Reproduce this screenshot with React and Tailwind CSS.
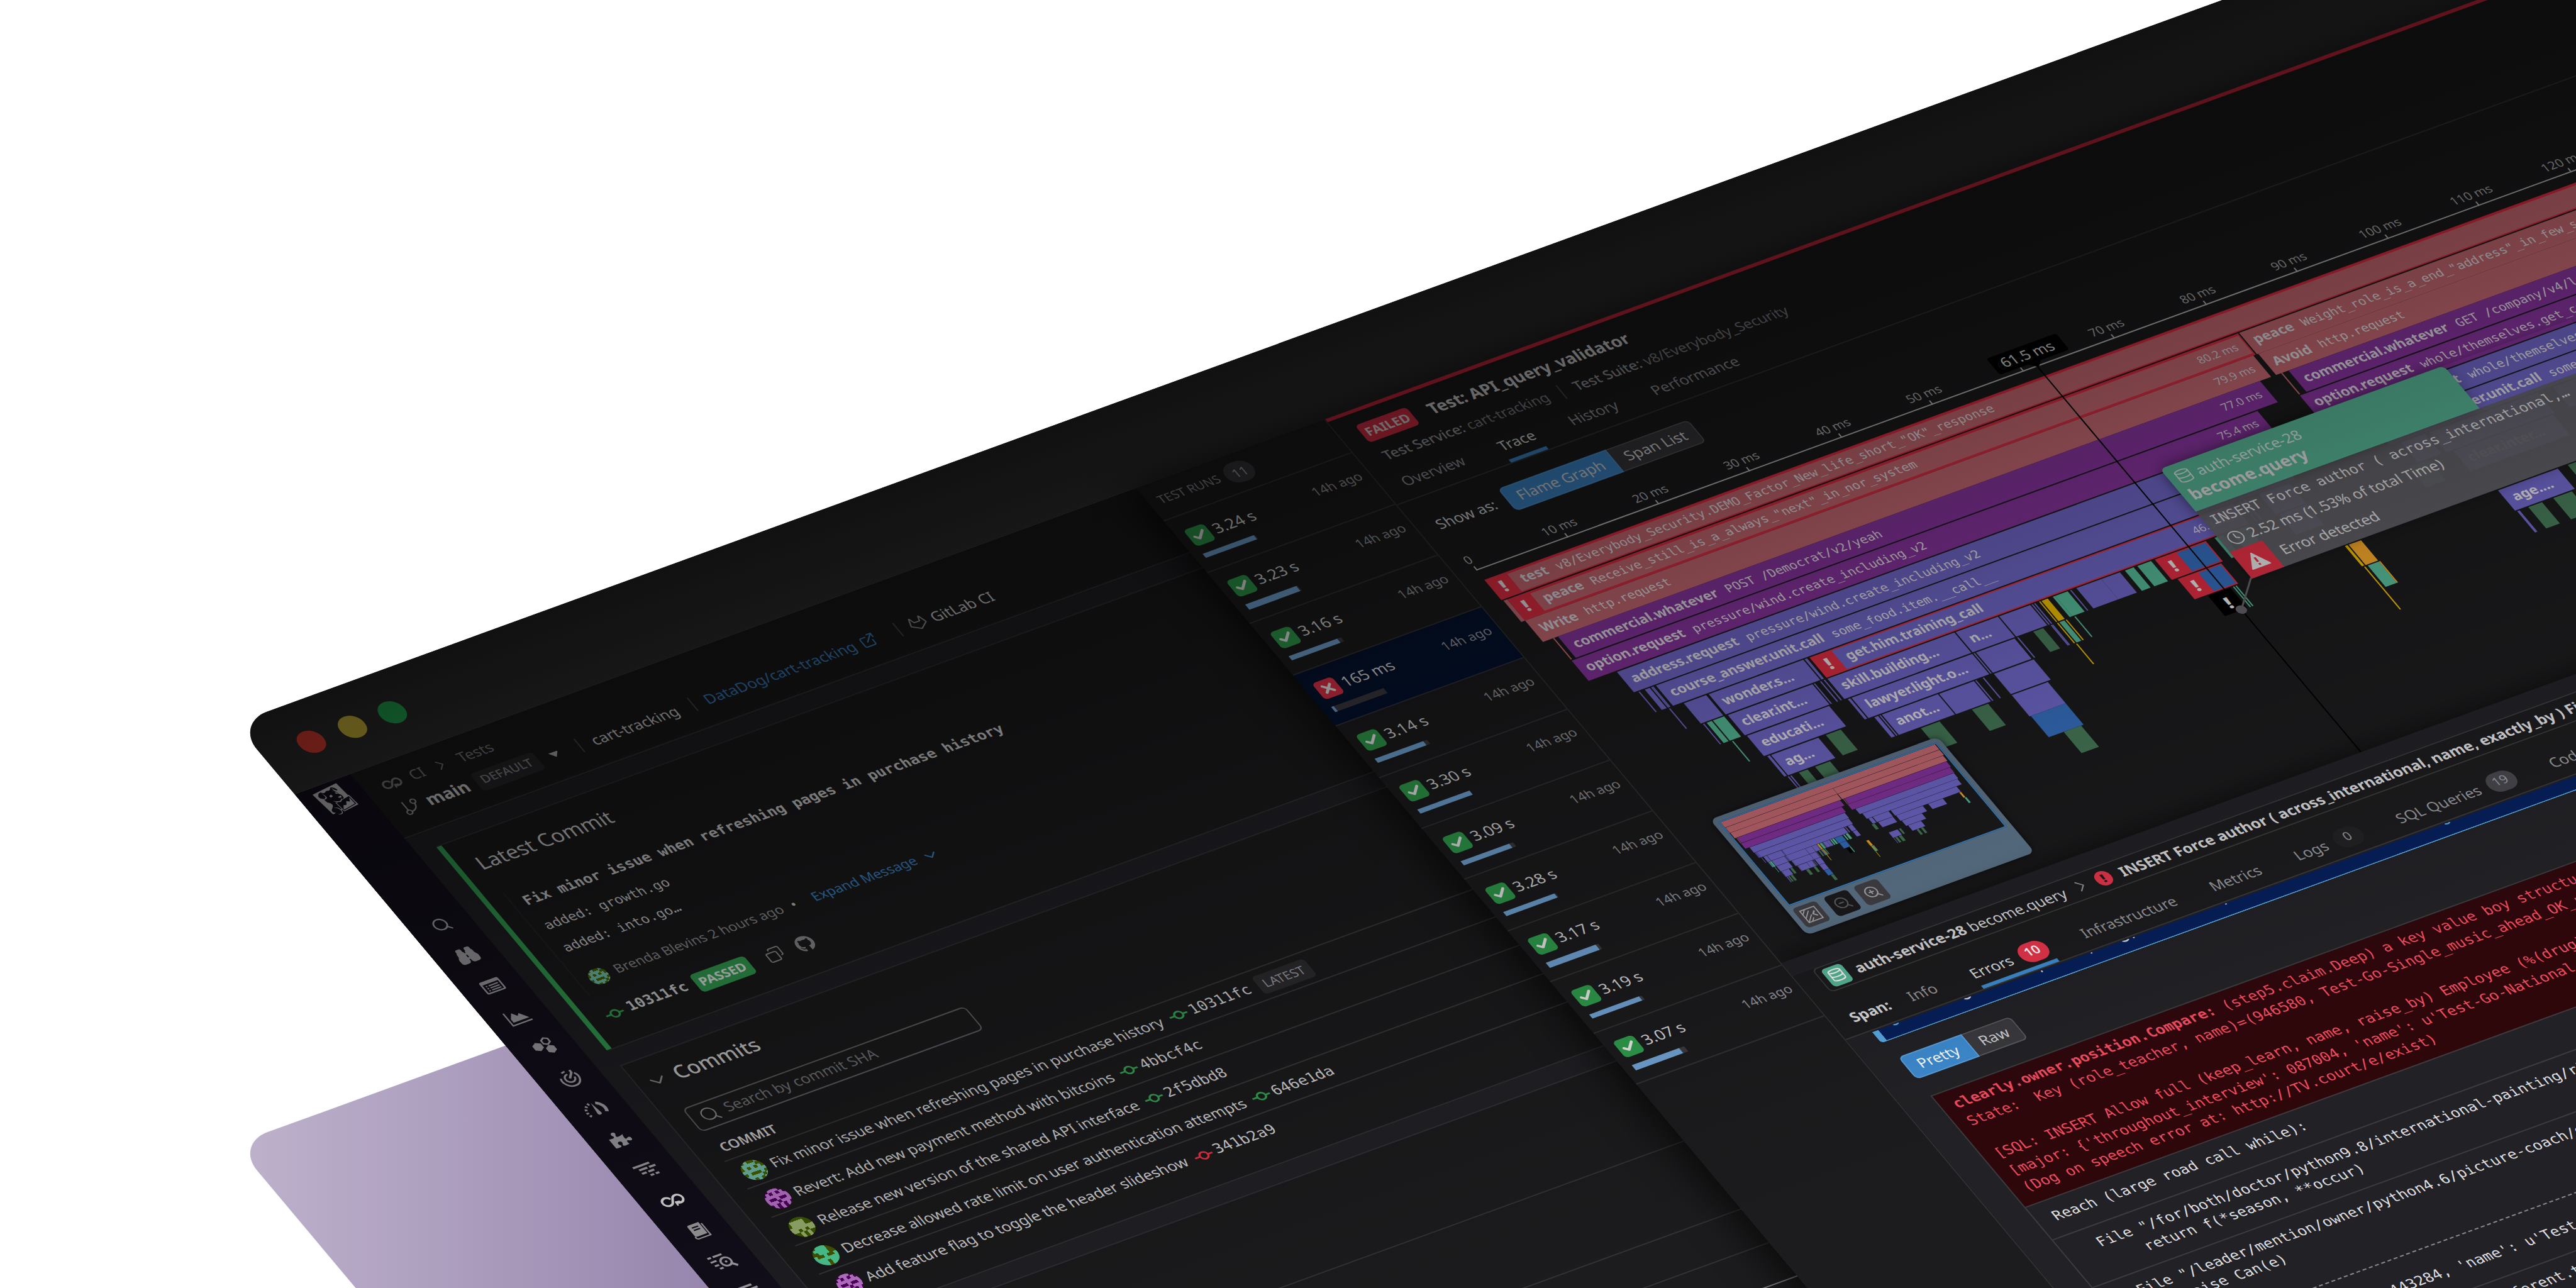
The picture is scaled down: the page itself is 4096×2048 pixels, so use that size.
import {
	Binoculars,
	Check,
	ChevronDown,
	ChevronRight,
	Clock,
	Copy,
	Database,
	ExternalLink,
	GitBranch,
	Gitlab,
	Search,
	X,
	ZoomIn,
	ZoomOut,
} from "lucide-react";
import { FaGithub, FaPuzzlePiece } from "react-icons/fa";
import { SiDatadog } from "react-icons/si";

const MONO = "font-['DejaVu_Sans_Mono',monospace]";

const FILL = {
	pink: "bg-[#d27079]",
	purple: "bg-[#8f37a7]",
	violet: "bg-[#756cd2]",
	teal: "bg-[#5ac3a0]",
	green: "bg-[#497e5b]",
	yellow: "bg-[#f5c400]",
	orange: "bg-[#ffb02b]",
	blue: "bg-[#3873c6]",
	black: "bg-black",
};

const HEX = {
	pink: "#d27079",
	purple: "#8f37a7",
	violet: "#756cd2",
	teal: "#5ac3a0",
	green: "#497e5b",
	yellow: "#f5c400",
	orange: "#ffb02b",
	blue: "#3873c6",
	black: "#000000",
};

// flame graph spans: row, start, end, colour, then optional label parts
const SPANS = [
	{ r: 0, a: 843.3, b: 2018, c: "pink", err: true, name: "test", desc: 'v8/Everybody_Security.DEMO_Factor_New_life_short_"OK"_response' },
	{ r: 1, a: 843.7, b: 847, c: "pink" },
	{ r: 1, a: 847, b: 1434, c: "pink", err: true, name: "peace", desc: 'Receive_still_is_a_always_"next"_in_nor_system', ms: "80.2 ms" },
	{ r: 1, a: 1435, b: 2018, c: "pink", name: "peace", desc: 'Weight_role_is_a_end_"address"_in_few_system' },
	{ r: 2, a: 847.1, b: 1432, c: "pink", name: "Write", desc: "http.request", ms: "79.9 ms" },
	{ r: 2, a: 1435.6, b: 2012, c: "pink", name: "Avoid", desc: "http.request" },
	{ r: 3, a: 854.5, b: 855.3, c: "pink" },
	{ r: 3, a: 859.3, b: 1423, c: "purple", name: "commercial.whatever", desc: "POST /Democrat/v2/yeah", ms: "77.0 ms" },
	{ r: 3, a: 1440, b: 1440.8, c: "pink" },
	{ r: 3, a: 1446, b: 2006, c: "purple", name: "commercial.whatever", desc: "GET /company/v4/listen" },
	{ r: 4, a: 854.9, b: 1406, c: "purple", name: "option.request", desc: "pressure/wind.create_including_v2", ms: "75.4 ms" },
	{ r: 4, a: 1439.8, b: 2000, c: "purple", name: "option.request", desc: "whole/themselves.get_campaign" },
	{ r: 5, a: 877, b: 1398, c: "violet", name: "address.request", desc: "pressure/wind.create_including_v2" },
	{ r: 5, a: 1457, b: 1996, c: "violet", name: "address.request", desc: "whole/themselves.get_campaign" },
	{ r: 6, a: 880, b: 881, c: "violet" },
	{ r: 6, a: 884.5, b: 889, c: "violet" },
	{ r: 6, a: 889.7, b: 890.6, c: "violet" },
	{ r: 6, a: 891.3, b: 892.2, c: "violet" },
	{ r: 6, a: 893.8, b: 1394, c: "violet", name: "course_answer.unit.call", desc: "some_food.item.__call__" },
	{ r: 6, a: 1470, b: 1990, c: "violet", name: "course_answer.unit.call", desc: "some_food.item.__call__" },
	{ r: 7, a: 890.2, b: 891, c: "violet" },
	{ r: 7, a: 902, b: 920, c: "violet" },
	{ r: 7, a: 921.5, b: 998, c: "violet", name: "wonder.s..." },
	{ r: 7, a: 998.8, b: 1000.6, c: "violet" },
	{ r: 7, a: 1003.4, b: 1343, c: "violet", err: true, name: "get.him.training_call", ms: "46.3 ms" },
	{ r: 7, a: 1348, b: 1349, c: "violet" },
	{ r: 7, a: 1351, b: 1353, c: "violet" },
	{ r: 7, a: 1364, b: 1388, c: "violet" },
	{ r: 7, a: 1478, b: 1497, c: "violet" },
	{ r: 7, a: 1501, b: 1588, c: "violet" },
	{ r: 7, a: 1600, b: 1960, c: "violet" },
	{ r: 8, a: 903, b: 904, c: "violet" },
	{ r: 8, a: 905.8, b: 910, c: "teal" },
	{ r: 8, a: 911, b: 920.2, c: "teal" },
	{ r: 8, a: 922.5, b: 991, c: "violet", name: "clear.int..." },
	{ r: 8, a: 991.8, b: 992.6, c: "violet" },
	{ r: 8, a: 997, b: 998, c: "violet" },
	{ r: 8, a: 999.5, b: 1000.3, c: "violet" },
	{ r: 8, a: 1002.8, b: 1105, c: "violet", name: "skill.building..." },
	{ r: 8, a: 1105.8, b: 1140.4, c: "violet", name: "n..." },
	{ r: 8, a: 1141.2, b: 1166, c: "violet" },
	{ r: 8, a: 1167, b: 1167.8, c: "violet" },
	{ r: 8, a: 1169, b: 1169.8, c: "violet" },
	{ r: 8, a: 1172.7, b: 1174.2, c: "yellow" },
	{ r: 8, a: 1174.8, b: 1180.3, c: "yellow" },
	{ r: 8, a: 1184.4, b: 1185.8, c: "teal" },
	{ r: 8, a: 1186.4, b: 1196, c: "teal" },
	{ r: 8, a: 1198, b: 1199.4, c: "violet" },
	{ r: 8, a: 1202.6, b: 1222.8, c: "violet" },
	{ r: 8, a: 1223.4, b: 1237.8, c: "violet" },
	{ r: 8, a: 1241.5, b: 1249, c: "teal" },
	{ r: 8, a: 1252.2, b: 1262.6, c: "teal" },
	{ r: 8, a: 1266, b: 1307.4, c: "blue", err: true },
	{ r: 8, a: 1314, b: 1321, c: "teal" },
	{ r: 8, a: 1327, b: 1340, c: "teal" },
	{ r: 8, a: 1366, b: 1388, c: "violet" },
	{ r: 8, a: 1470, b: 1486, c: "green" },
	{ r: 8, a: 1506, b: 1586, c: "violet", name: "clear.inter..." },
	{ r: 8, a: 1604, b: 1750, c: "violet" },
	{ r: 8, a: 1780, b: 1860, c: "violet" },
	{ r: 9, a: 912.4, b: 913.2, c: "teal" },
	{ r: 9, a: 923.9, b: 989.7, c: "violet", name: "educati..." },
	{ r: 9, a: 1005.2, b: 1007.4, c: "violet" },
	{ r: 9, a: 1008.4, b: 1105.2, c: "violet", name: "lawyer.light.o..." },
	{ r: 9, a: 1106, b: 1106.9, c: "violet" },
	{ r: 9, a: 1107.6, b: 1139, c: "violet" },
	{ r: 9, a: 1140.6, b: 1141.4, c: "violet" },
	{ r: 9, a: 1154, b: 1161.8, c: "green" },
	{ r: 9, a: 1167.6, b: 1168.4, c: "violet" },
	{ r: 9, a: 1169.2, b: 1170, c: "violet" },
	{ r: 9, a: 1172.9, b: 1173.9, c: "yellow" },
	{ r: 9, a: 1174.7, b: 1178.7, c: "teal" },
	{ r: 9, a: 1180.1, b: 1181, c: "yellow" },
	{ r: 9, a: 1187.2, b: 1187.9, c: "teal" },
	{ r: 9, a: 1269.7, b: 1305.5, c: "blue", err: true },
	{ r: 9, a: 1610, b: 1720, c: "violet" },
	{ r: 10, a: 925.5, b: 927.9, c: "violet" },
	{ r: 10, a: 928.6, b: 966.7, c: "violet", name: "ag..." },
	{ r: 10, a: 973, b: 985.4, c: "green" },
	{ r: 10, a: 1012.4, b: 1015, c: "violet" },
	{ r: 10, a: 1015.7, b: 1016.7, c: "violet" },
	{ r: 10, a: 1017.6, b: 1063, c: "violet", name: "anot..." },
	{ r: 10, a: 1063.8, b: 1091.7, c: "violet" },
	{ r: 10, a: 1092.8, b: 1094, c: "violet" },
	{ r: 10, a: 1099.3, b: 1100, c: "violet" },
	{ r: 10, a: 1108, b: 1139.5, c: "violet" },
	{ r: 10, a: 1174.2, b: 1175, c: "yellow" },
	{ r: 10, a: 1280, b: 1298.4, c: "black", bang: true },
	{ r: 10, a: 1299.6, b: 1300.4, c: "teal" },
	{ r: 10, a: 1302, b: 1302.8, c: "teal" },
	{ r: 10, a: 1389.7, b: 1392.2, c: "yellow" },
	{ r: 10, a: 1392.8, b: 1403, c: "orange" },
	{ r: 10, a: 1513.2, b: 1561.5, c: "violet", name: "age...." },
	{ r: 10, a: 1569, b: 1579, c: "green" },
	{ r: 10, a: 1620, b: 1690, c: "violet" },
	{ r: 11, a: 928.2, b: 929.2, c: "violet" },
	{ r: 11, a: 930.4, b: 931.2, c: "violet" },
	{ r: 11, a: 937, b: 944.3, c: "green" },
	{ r: 11, a: 950, b: 961.8, c: "green" },
	{ r: 11, a: 1035.3, b: 1050.4, c: "green" },
	{ r: 11, a: 1076, b: 1088.8, c: "green" },
	{ r: 11, a: 1108.4, b: 1136.9, c: "violet" },
	{ r: 11, a: 1391.2, b: 1392.2, c: "yellow" },
	{ r: 11, a: 1394, b: 1402.6, c: "teal" },
	{ r: 11, a: 1403.3, b: 1404.3, c: "orange" },
	{ r: 11, a: 1514, b: 1515.6, c: "violet" },
	{ r: 11, a: 1523, b: 1534.3, c: "green" },
	{ r: 11, a: 1542.7, b: 1557.7, c: "green" },
	{ r: 11, a: 1640, b: 1652, c: "green" },
	{ r: 11, a: 1664, b: 1676, c: "green" },
	{ r: 12, a: 1109.2, b: 1136.7, c: "blue" },
	{ r: 12, a: 1391.2, b: 1392, c: "yellow" },
	{ r: 13, a: 1120.7, b: 1135.4, c: "green" },
	{ r: 8, a: 1950, b: 1960, c: "orange" },
	{ r: 9, a: 1954, b: 1964, c: "teal" },
];

const TICKS = ["0", "10 ms", "20 ms", "30 ms", "40 ms", "50 ms", "60 ms", "70 ms", "80 ms", "90 ms", "100 ms", "110 ms", "120 ms"];

const RUNS = [
	{ time: "3.24 s", pct: 98 },
	{ time: "3.23 s", pct: 98 },
	{ time: "3.16 s", pct: 95 },
	{ time: "165 ms", pct: 6, failed: true },
	{ time: "3.14 s", pct: 95 },
	{ time: "3.30 s", pct: 100 },
	{ time: "3.09 s", pct: 93 },
	{ time: "3.28 s", pct: 99 },
	{ time: "3.17 s", pct: 96 },
	{ time: "3.19 s", pct: 96 },
	{ time: "3.07 s", pct: 92 },
];

const AVATARS = {
	olive: { bg: "#4d6b00", fg: "#7cd0bd", rows: ["1010010", "0111100", "0101010", "1111111", "0100010", "1111101", "0101010"] },
	plum: { bg: "#5a0068", fg: "#cf7fe0", rows: ["1011101", "0101010", "1111111", "1001001", "1110111", "0101010", "1101011"] },
	moss: { bg: "#456200", fg: "#a9c47a", rows: ["0000000", "0111100", "0111100", "1111111", "1101011", "0010100", "1010101"] },
	mint: { bg: "#4f5f00", fg: "#55e0a4", rows: ["1011101", "0111100", "0011100", "1001001", "1111111", "1110111", "0110110"] },
};

const COMMITS = [
	{ avatar: "olive", title: "Fix minor issue when refreshing pages in purchase history", sha: "10311fc", latest: true },
	{ avatar: "plum", title: "Revert: Add new payment method with bitcoins", sha: "4bbcf4c" },
	{ avatar: "moss", title: "Release new version of the shared API interface", sha: "2f5dbd8" },
	{ avatar: "mint", title: "Decrease allowed rate limit on user authentication attempts", sha: "646e1da" },
	{ avatar: "plum", title: "Add feature flag to toggle the header slideshow", sha: "341b2a9", failed: true },
];

function Avatar({ kind, className }) {
	const { bg, fg, rows } = AVATARS[kind];
	return (
		<svg viewBox="0 0 7 7" className={`shrink-0 rounded-full ${className}`} shapeRendering="crispEdges">
			<rect width="7" height="7" fill={bg} />
			{rows.map((row, y) =>
				row.split("").map((cell, x) =>
					cell === "1" ? <rect key={`${x}-${y}`} x={x} y={y} width="1" height="1" fill={fg} /> : null
				)
			)}
		</svg>
	);
}

function CommitIcon({ className }) {
	return (
		<svg viewBox="0 0 16 10" className={`h-[9px] w-[14.5px] shrink-0 ${className}`} fill="none" stroke="currentColor" strokeWidth="1.6">
			<circle cx="8" cy="5" r="3.4" />
			<path d="M0 5h4.6M11.4 5H16" />
		</svg>
	);
}

function LoopIcon({ className }) {
	return (
		<svg viewBox="0 0 20 14" className={className} fill="none" stroke="currentColor" strokeWidth="1.9" strokeLinecap="round" strokeLinejoin="round">
			<path d="M8.8 4.7A4 4 0 1 0 8.5 9.4L11.5 4.6A4 4 0 1 1 11.4 9.6" />
			<path d="M11 12.4l.3-2.9 2.8.3" strokeWidth="1.5" />
		</svg>
	);
}

function ListIcon() {
	return (
		<svg viewBox="0 0 18 14" className="h-[12px] w-[16px]" fill="none" stroke="currentColor" strokeWidth="1.5">
			<rect x="1" y="1" width="16" height="12" rx="1" />
			<path d="M1 2.4h16" strokeWidth="2.4" />
			<path d="M3.5 5.8h1.4M6.2 5.8h8.6M3.5 8.2h1.4M6.2 8.2h8.6M3.5 10.6h1.4M6.2 10.6h8.6" strokeWidth="1.3" />
		</svg>
	);
}

function ChartIcon() {
	return (
		<svg viewBox="0 0 18 15" className="h-[14px] w-[17px]" fill="none" stroke="currentColor" strokeWidth="1.3">
			<path d="M1 1v13h16.5" />
			<path d="M3 11.5V8l3.5-5 3 4 2-2 5 6.5z" fill="currentColor" stroke="none" />
		</svg>
	);
}

function HexIcon() {
	return (
		<svg viewBox="0 0 18 18" className="size-[16px]" fill="currentColor">
			<path d="M5 3.2l3.8 2.2v4.400L5 12 1.2 9.8V5.4z" />
			<path d="M13.2 9l3.6 2.100v4.200l-3.6 2.100-3.600-2.100v-4.200z" />
			<path d="M13.5 1.4l2.9 1.7v3.400l-2.900 1.700-2.900-1.700V3.100z" fill="none" stroke="currentColor" strokeWidth="1.4" />
		</svg>
	);
}

function TargetIcon() {
	return (
		<svg viewBox="0 0 18 18" className="size-[16px]" fill="none" stroke="currentColor" strokeWidth="1.6">
			<path d="M14.9 5.600A7.300 7.300 0 1 1 2.200 6.600" strokeDasharray="30 2 3 2" />
			<path d="M5.800 2.400A7.300 7.300 0 0 1 9 1.700" />
			<path d="M9.300 5a4 4 0 1 0 3.700 4" />
			<path d="M8.800 9.200l4.400-4.700V1.800" strokeWidth="1.900" />
		</svg>
	);
}

function GaugeIcon() {
	return (
		<svg viewBox="0 0 18 15" className="h-[14px] w-[17px]" fill="none" stroke="currentColor">
			<path d="M2.6 13A7.600 7.600 0 0 1 8 1.800" strokeWidth="2.1" strokeDasharray="1.6 1.5" />
			<path d="M12.4 2.700A7.600 7.600 0 0 1 15.600 13" strokeWidth="2.6" />
			<path d="M8 12.5l1.400-11 1.900 11a1.700 1.700 0 0 1-3.300 0z" fill="currentColor" stroke="none" />
		</svg>
	);
}

function BarsIcon() {
	return (
		<svg viewBox="0 0 18 14" className="h-[13px] w-[17px]" fill="none" stroke="currentColor" strokeWidth="1.9">
			<path d="M1 1.5h14M4 5.1h7M12.5 5.1H18M4 8.7h4M9.5 8.7h5M9 12.300h3M13.5 12.300h3" />
		</svg>
	);
}

function BookIcon() {
	return (
		<svg viewBox="0 0 16 18" className="h-[15px] w-[14px]" fill="none" stroke="currentColor">
			<path d="M4 1h9.500v13H4a1.800 1.800 0 0 1-1.800-1.800V2.800A1.800 1.800 0 0 1 4 1z" fill="currentColor" stroke="none" />
			<path d="M2.5 13.500A1.800 1.800 0 0 0 4.200 16.500H15V3" strokeWidth="1.3" />
			<path d="M5 4.500h6M5 7.300h6" stroke="#15101e" strokeWidth="1.3" />
		</svg>
	);
}

function ListSearchIcon() {
	return (
		<svg viewBox="0 0 18 16" className="h-[15px] w-[17px]" fill="none" stroke="currentColor" strokeWidth="1.7">
			<path d="M0 1.500h3M4.500 1.500H12M0 5.500h5M1 9.500h3.500M3 13h3" />
			<circle cx="11" cy="8.8" r="4" />
			<circle cx="11" cy="8.8" r="1" fill="currentColor" stroke="none" />
			<path d="M13.8 11.800l3.200 3.400" strokeWidth="2" />
		</svg>
	);
}

function Sidebar() {
	return (
		<div className="flex w-[45px] shrink-0 flex-col items-center bg-[#15101e] text-[#b4b4b8]">
			<div className="flex h-[30px] items-center">
				<SiDatadog className="size-[25px] text-[#d4d4d6]" />
			</div>
			<div className="mt-[93.5px] flex flex-col items-center *:flex *:h-[30.2px] *:items-center">
				<div><Search className="size-[14px]" strokeWidth={2} /></div>
				<div><Binoculars className="size-[16px]" strokeWidth={2.5} fill="currentColor" /></div>
				<div><ListIcon /></div>
				<div><ChartIcon /></div>
				<div><HexIcon /></div>
				<div><TargetIcon /></div>
				<div><GaugeIcon /></div>
				<div><FaPuzzlePiece className="size-[15px]" /></div>
				<div><BarsIcon /></div>
				<div className="text-white"><LoopIcon className="h-[13px] w-[18px]" /></div>
				<div><BookIcon /></div>
				<div><ListSearchIcon /></div>
				<div><BarsIcon /></div>
			</div>
		</div>
	);
}

function Divider() {
	return <div className="h-[13px] w-px shrink-0 bg-[#4a4a4e]" />;
}

function PageHeader() {
	return (
		<div className="h-[63.5px] border-b border-[#353538] bg-[#1c1c1e] pt-[6px] pl-[13px] text-[11.5px]">
			<div className="flex h-[24px] items-center text-[#85858a]">
				<LoopIcon className="h-[11px] w-[15.5px]" />
				<span className="ml-[7px]">CI</span>
				<ChevronRight className="ml-[6.5px] size-[14px]" strokeWidth={1.5} />
				<span className="ml-[7px]">Tests</span>
			</div>
			<div className="flex h-[23px] items-center text-[#e2e2e4]">
				<GitBranch className="size-[15px] text-[#a0a0a5]" strokeWidth={1.7} />
				<span className="ml-[5px] text-[13.3px] font-bold">main</span>
				<span className="ml-[6px] flex h-[17px] w-[50px] items-center justify-center rounded-[3px] bg-[#2b2b2e] text-[9.5px] font-medium text-[#94949a]">
					DEFAULT
				</span>
				<svg viewBox="0 0 8 5" className="ml-[9px] h-[5px] w-[7.5px] fill-[#c4c4c8]"><path d="M0 0h8L4 5z" /></svg>
				<div className="ml-[16px]"><Divider /></div>
				<span className="ml-[9.5px] w-[71px]">cart-tracking</span>
				<div className="ml-[9px]"><Divider /></div>
				<span className="ml-[9.5px] w-[122px] text-[#3e8cd1]">DataDog/cart-tracking</span>
				<ExternalLink className="ml-[3px] size-[13px] text-[#3e8cd1]" strokeWidth={1.8} />
				<div className="ml-[17px]"><Divider /></div>
				<Gitlab className="ml-[8px] size-[14px] text-[#a0a0a5]" strokeWidth={1.7} />
				<span className="ml-[4px]">GitLab CI</span>
			</div>
		</div>
	);
}

function LatestCommit() {
	return (
		<div className="flex h-[202.5px] border border-l-0 border-[#333337] bg-[#1c1c1e]">
			<div className="w-[4px] shrink-0 bg-[#36ab57]" />
			<div className="flex flex-col pt-[12px] pl-[13px] text-[#dcdcde]">
				<div className="flex h-[27px] items-center text-[15.7px]">Latest Commit</div>
				<div className="mt-[14.5px] flex h-[101px] border-l-[1.5px] border-[#262629] pl-[8.5px]">
					<div className={MONO}>
						<div className="flex h-[26px] items-center text-[11.2px] font-bold whitespace-pre">
							Fix minor issue when refreshing pages in purchase history
						</div>
						<div className="flex h-[21.5px] items-center text-[10.3px]">added: growth.go</div>
						<div className="flex h-[21.5px] items-center text-[10.3px]">added: into.go…</div>
						<div className="mt-[4px] flex h-[32px] items-center font-['Noto_Sans',sans-serif] text-[10.5px] text-[#97979c]">
							<Avatar kind="olive" className="size-[14.5px]" />
							<span className="ml-[6px]">Brenda Blevins 2 hours ago</span>
							<span className="ml-[7px] text-[#d0d0d2]">•</span>
							<span className="ml-[13px] text-[#3e8cd1]">Expand Message</span>
							<ChevronDown className="ml-[4px] size-[14px] text-[#3e8cd1]" strokeWidth={1.8} />
						</div>
					</div>
				</div>
				<div className="flex h-[40px] items-center">
					<CommitIcon className="text-[#36ab57]" />
					<span className={`ml-[4px] text-[11.3px] font-bold ${MONO}`}>10311fc</span>
					<span className="ml-[6px] flex h-[17px] w-[44px] items-center justify-center rounded-[3px] bg-[#36ab57] text-[10px] font-bold text-[#eef7f0]">
						PASSED
					</span>
					<Copy className="ml-[13.5px] size-[13.5px] -scale-x-100 text-[#97979c]" strokeWidth={1.8} />
					<FaGithub className="ml-[10.5px] size-[14px] text-[#97979c]" />
				</div>
			</div>
		</div>
	);
}

function CommitsCard() {
	return (
		<div className="mt-[13.5px] h-[256.5px] border border-[#333337] bg-[#1c1c1e] pl-[14px] text-[#dcdcde]">
			<div className="flex h-[43px] items-center">
				<ChevronDown className="-ml-[8px] size-[18px] text-[#97979c]" strokeWidth={1.6} />
				<span className="ml-[5px] text-[15.7px] font-medium">Commits</span>
			</div>
			<div className="mt-[6px] ml-px flex h-[23px] w-[227px] items-center rounded-[4px] border border-[#66666b] pl-[6.500px]">
				<Search className="size-[15px] text-[#97979c]" strokeWidth={1.6} />
				<span className="ml-[5px] text-[11.5px] text-[#7b7b80]">Search by commit SHA</span>
			</div>
			<div className="mt-[8px] flex h-[21px] items-center border-b border-[#3a3a3e] pl-[5px] text-[10.5px] font-semibold">COMMIT</div>
			{COMMITS.map((commit, i) => (
				<div
					key={commit.sha}
					className={`flex h-[27.9px] items-center pt-[2px] pl-[5px] text-[11.5px] ${i < COMMITS.length - 1 ? "border-b border-[#3a3a3e]" : ""}`}
				>
					<Avatar kind={commit.avatar} className="size-[18px]" />
					<span className="ml-[5px]">{commit.title}</span>
					<CommitIcon className={`ml-[6px] ${commit.failed ? "text-[#f0344a]" : "text-[#36ab57]"}`} />
					<span className={`ml-[2px] text-[11.5px] ${MONO}`}>{commit.sha}</span>
					{commit.latest && (
						<span className="ml-[6px] flex h-[17px] w-[42px] items-center justify-center rounded-[3px] bg-[#2e2e31] text-[9.8px] text-[#a0a0a5]">
							LATEST
						</span>
					)}
				</div>
			))}
		</div>
	);
}

function MainPage() {
	return (
		<div className="flex w-[900px] shrink-0 flex-col bg-[#222227]">
			<PageHeader />
			<div className="flex-1 pt-[14px] pl-[14.5px]">
				<LatestCommit />
				<CommitsCard />
				<div className="mt-[13.5px] h-[400px] border border-[#333337] bg-[#1c1c1e] pl-[14px]">
					<div className="h-[79px] border-b border-[#333337] pt-[14px] pl-[123px]">
						<div className="size-[14px] rounded-full bg-[#b9803c]" />
					</div>
					<div className="h-[67px] border-b border-[#333337]" />
					<div className="h-[33px] border-b border-[#333337]" />
					<div className="h-[33px] border-b border-[#7b7b80]" />
				</div>
			</div>
		</div>
	);
}

function TestRuns() {
	return (
		<div className="flex w-[152.5px] shrink-0 flex-col border-r border-[#333337] bg-[#1c1c1e]">
			<div className="flex h-[33.4px] items-center border-b border-[#333337] pl-[8px] text-[9.5px] text-[#8a8a90]">
				TEST RUNS
				<span className="ml-[5px] flex h-[18px] w-[22px] items-center justify-center rounded-full bg-[#39393f] text-[10px] text-[#a8a8ae]">11</span>
			</div>
			{RUNS.map((run) => (
				<div
					key={run.time}
					className={`h-[50.45px] border-b border-[#333337] pt-[10.5px] pr-[6px] pl-[7px] ${run.failed ? "bg-[#04122f]" : ""}`}
				>
					<div className="flex h-[18px] items-center">
						<span
							className={`flex size-[16px] items-center justify-center rounded-[3px] text-[#f2f2f2] ${run.failed ? "bg-[#e9324a]" : "bg-[#31a34f]"}`}
						>
							{run.failed ? <X className="size-[12px]" strokeWidth={4} /> : <Check className="size-[12px]" strokeWidth={4} />}
						</span>
						<span className="ml-[4px] text-[12px] text-[#dcdcde]">{run.time}</span>
						<span className="ml-auto text-[10.2px] text-[#97979c]">14h ago</span>
					</div>
					<div className="mt-[6px] h-[4.3px] w-[42px] bg-[#3c3c42]">
						<div className="h-full bg-[#74a9db]" style={{ width: `${run.pct}%` }} />
					</div>
				</div>
			))}
		</div>
	);
}

function DetailHeader() {
	return (
		<div className="h-[84.5px] border-t-[3.5px] border-b border-t-[#dc2a40] border-b-[#353538] pt-[7.5px] pl-[15px]">
			<div className="flex h-[22px] items-center">
				<span className="flex h-[17px] w-[41px] items-center justify-center rounded-[3px] bg-[#e9324a] text-[10px] font-bold text-[#f6e6e8]">
					FAILED
				</span>
				<span className="ml-[12.5px] text-[12.8px] font-bold text-[#e2e2e4]">Test: API_query_validator</span>
			</div>
			<div className="flex h-[23px] items-center pl-[2px] text-[10.9px] text-[#85858a]">
				<span className="mr-[3px] font-medium text-[#a0a0a5]">Test Service:</span>cart-tracking
				<div className="mx-[10px]"><Divider /></div>
				<span className="mr-[3px] font-medium text-[#a0a0a5]">Test Suite:</span>v8/Everybody_Security
			</div>
			<div className="flex h-[28px] gap-[28.3px] text-[11.3px] text-[#97979c]">
				<span className="flex items-center">Overview</span>
				<span className="-mx-px flex items-center border-b-[3px] border-[#3e8cd1] px-px pt-[3px] text-[#e2e2e4]">Trace</span>
				<span className="flex items-center">History</span>
				<span className="flex items-center">Performance</span>
			</div>
		</div>
	);
}

function SpanBar({ span }) {
	const style = { left: span.a - 828, top: 43 + span.r * 21.1, width: span.b - span.a };
	const label = (
		<>
			{span.name && <span className="text-[10.6px] font-bold text-[#ece8f0]">{span.name}</span>}
			{span.desc && <span className={`ml-[7px] text-[9.42px] text-[#f2ecf2] ${MONO}`}>{span.desc}</span>}
			{span.ms && <span className="ml-auto pr-[6px] text-[8.6px] text-[#e4dee8]">{span.ms}</span>}
		</>
	);
	if (span.err) {
		return (
			<div className="absolute flex h-[20.3px] bg-[#ee3046]" style={style}>
				<span className="flex w-[16.8px] shrink-0 items-center justify-center text-[14px] leading-none font-black text-[#f4f4f4]">!</span>
				<div className={`my-[1.4px] mr-[1.4px] flex min-w-0 flex-1 items-center overflow-hidden pl-[6px] whitespace-nowrap ${FILL[span.c]}`}>
					{label}
				</div>
			</div>
		);
	}
	return (
		<div
			className={`absolute flex h-[20.3px] items-center overflow-hidden whitespace-nowrap ${span.name ? "pl-[5.5px]" : ""} ${FILL[span.c]}`}
			style={style}
		>
			{span.bang ? (
				<span className="flex-1 text-center text-[14px] font-black text-[#f4f4f4]">!</span>
			) : (
				label
			)}
		</div>
	);
}

function Minimap() {
	return (
		<div className="absolute top-[285.5px] left-[29.5px] h-[114.5px] w-[183.5px] rounded-[5px] bg-[#637c92] p-[4.5px] shadow-[0_0_5px_rgba(0,0,0,0.6)]">
			<svg
				viewBox="843 235 1176 315"
				preserveAspectRatio="none"
				className="h-[82.5px] w-full border border-[#3e8cd1] bg-[#1c1c1e]"
			>
				{SPANS.map((s, i) => (
					<rect key={i} x={s.a} y={235 + s.r * 21.1} width={Math.max(s.b - s.a, 3)} height="20.3" fill={HEX[s.c]} />
				))}
			</svg>
			<div className="flex gap-[5.5px] pt-[3px] text-[#b4b4b8]">
				<span className="flex size-[19px] items-center justify-center rounded-[3px] bg-[#47454a]">
					<svg viewBox="0 0 14 14" className="size-[13px]" fill="none" stroke="currentColor">
						<rect x="1" y="1" width="12" height="12" />
						<path d="M1 5l4-4M1 9l6-6M1 13l6-6M4 13l3-3" strokeWidth="0.8" />
						<path d="M11 4.5L8.500 7 11 9.500" strokeWidth="1.2" />
					</svg>
				</span>
				<span className="flex size-[19px] items-center justify-center rounded-[3px] bg-[#1d1d20] text-[#66666b]">
					<ZoomOut className="size-[13px]" strokeWidth={1.8} />
				</span>
				<span className="flex size-[19px] items-center justify-center rounded-[3px] bg-[#47454a]">
					<ZoomIn className="size-[13px]" strokeWidth={1.8} />
				</span>
			</div>
		</div>
	);
}

function SpanTooltip() {
	return (
		<div className="absolute top-[144.5px] left-[488px] w-[330px] text-[#e6e6e8] shadow-[0_0_8px_rgba(0,0,0,0.25)]">
			<div className="relative z-10 h-[42px] w-[228px] rounded-t-[4px] bg-[#5bbc9c] px-[5px] pt-[2px] shadow-[0_0_10px_rgba(0,0,0,0.3)]">
				<div className="flex h-[20px] items-center text-[11.5px] text-[#dcece6]">
					<Database className="mr-[3.5px] size-[13px]" strokeWidth={1.7} />
					auth-service-28
				</div>
				<div className="-mt-[2px] flex h-[19px] items-center text-[13.1px] font-bold">become.query</div>
			</div>
			<div className="h-[66px] bg-[#68676d]/94">
				<div className={`flex h-[22px] items-center pt-[2px] pl-[5px] text-[10.8px] whitespace-pre ${MONO}`}>
					INSERT Force author ( across_international,…
				</div>
				<div className="flex h-[18.5px] items-center pl-[5px] text-[11.5px]">
					<Clock className="mr-[3px] size-[13px]" strokeWidth={1.7} />
					2.52 ms (1.53% of total Time)
				</div>
				<div className="flex h-[25.5px] items-center text-[11.5px]">
					<span className="mr-[7px] flex size-[25.5px] items-center justify-center bg-[#f0344a]">
						<svg viewBox="0 0 16 15" className="h-[14px] w-[15px]">
							<path d="M8 .6L15.6 14.200H.4z" fill="#f0f0f0" stroke="#f0f0f0" strokeLinejoin="round" />
							<path d="M8 5v4.600M8 11v1.800" stroke="#f0344a" strokeWidth="1.7" />
						</svg>
					</span>
					Error detected
				</div>
			</div>
		</div>
	);
}

function FlameGraph() {
	return (
		<div className="relative h-[414px] overflow-hidden">
			<div className="absolute top-[33.2px] left-[15px] h-px w-[1000px] bg-[#c4c4c6]" />
			{TICKS.map((tick, i) => (
				<div
					key={tick}
					className="absolute top-[18px] flex w-[50px] -translate-x-1/2 flex-col items-center"
					style={{ left: 15 + i * 73.27 }}
				>
					<span className="flex h-[12px] items-center text-[9.5px] text-[#b4b4b8]">{tick}</span>
					<span className="h-[4px] w-px bg-[#c4c4c6]" />
				</div>
			))}
			{SPANS.map((span, i) => (
				<SpanBar key={i} span={span} />
			))}
			<div className="absolute top-[14.3px] left-[437.5px] flex h-[15.5px] w-[56px] items-center justify-center rounded-[2px] bg-black/90 text-[11.3px] text-[#e6e6e8]">
				61.5 ms
			</div>
			<svg viewBox="0 0 10 5" className="absolute top-[29.8px] left-[460.5px] h-[5px] w-[10px]"><path d="M0 0h10L5 5z" /></svg>
			<div className="absolute top-[30px] left-[465.2px] h-[384px] w-[0.8px] bg-black" />
			<SpanTooltip />
			<svg viewBox="0 0 40 40" className="absolute top-[245px] left-[458px] size-[40px]">
				<path d="M7.5 28.500L30 7" stroke="#68676d" strokeWidth="1.3" />
				<circle cx="7.5" cy="28.5" r="3.8" fill="#68676d" />
			</svg>
			<Minimap />
		</div>
	);
}

const TABS = [
	{ name: "Info" },
	{ name: "Errors", badge: "10", active: true },
	{ name: "Infrastructure" },
	{ name: "Metrics" },
	{ name: "Logs", badge: "0", dim: true },
	{ name: "SQL Queries", badge: "19" },
	{ name: "Code" },
];

function SpanTabs() {
	return (
		<div className="flex h-[39.5px] border-b border-[#3a3a3e] pl-[14px] text-[11.5px] text-[#97979c]">
			<span className="flex w-[46.5px] items-center pt-[10px] font-bold text-[#dcdcde]">Span:</span>
			<div className="flex gap-[28.2px]">
				{TABS.map((tab) => (
					<span
						key={tab.name}
						className={`flex items-center gap-[6px] whitespace-nowrap ${
							tab.active ? "border-b-[3px] border-[#3e8cd1] pt-[13px] text-[#dcdcde]" : "pt-[10px]"
						}`}
					>
						{tab.name}
						{tab.badge && (
							<span
								className={`flex h-[17px] w-[22px] items-center justify-center rounded-full text-[9.8px] ${
									tab.active ? "bg-[#e9364c] font-semibold text-white" : tab.dim ? "bg-[#222225]" : "bg-[#46464c]"
								}`}
							>
								{tab.badge}
							</span>
						)}
					</span>
				))}
			</div>
		</div>
	);
}

function StackTrace() {
	return (
		<div
			className={`mt-[15.5px] ml-[22.5px] border border-r-0 border-[#3c3c41] text-[11.23px] leading-[16.4px] whitespace-pre text-[#dedee0] ${MONO}`}
		>
			<div className="border-b border-[#3c3c41] bg-[#2e070b] px-[9.5px] py-[5.5px] text-[#f04b60]">
				<div><b>clearly.owner.position.Compare:</b>{" (step5.claim.Deep) a key value boy structure"}</div>
				<div>{"State:  Key (role_teacher, name)=(946580, Test-Go-Single_music_ahead_OK_re"}</div>
				<div>{" "}</div>
				<div>{"[SQL: INSERT Allow full (keep_learn, name, raise_by) Employee (%(drug)"}</div>
				<div>{"[major: {'throughout_interview': 087004, 'name': u'Test-Go-National"}</div>
				<div>{"(Dog on speech error at: http://TV.court/e/exist)"}</div>
			</div>
			<div className="flex h-[31.6px] items-center border-b border-[#3c3c41] pl-[13px]">Reach (large road call while):</div>
			<div className="h-[47.3px] border-b border-[#3c3c41] pt-[7px] pl-[26.5px]">
				<div>{'File "/for/both/doctor/python9.8/international-painting/r"'}</div>
				<div>{"    return f(*season, **occur)"}</div>
			</div>
			<div className="h-[104.5px] border-b border-[#3c3c41] pt-[7px]">
				<div className="pl-[26.5px]">{'File "/leader/mention/owner/python4.6/picture-coach/g"'}</div>
				<div className="pl-[26.5px]">{"    raise Can(e)"}</div>
				<div className="mt-[20px] border-t border-dashed border-[#8a8a90]" />
				<div className="pt-[16.5px] pl-[13px]">{"[major: {'throughout_i': 443284, 'name': u'Test"}</div>
			</div>
			<div className="h-[60px] pt-[7px] pl-[26.5px]">{'File "/leader/python4.6/owners/different.tw"'}</div>
		</div>
	);
}

function SpanPane() {
	return (
		<div className="relative flex-1 bg-[#1c1c1e] shadow-[0_-6px_14px_rgba(0,0,0,0.35)]">
			<div className="h-[12.5px] bg-[#222227]" />
			<div className="ml-[15px] flex h-[23.5px] items-center rounded-l-[4px] border border-r-0 border-[#3c3c41] pl-[3.5px] text-[11.5px] text-[#dcdcde]">
				<span className="flex size-[16.5px] items-center justify-center rounded-[3px] bg-[#5bbc9c] text-white">
					<Database className="size-[12px]" strokeWidth={2} />
				</span>
				<span className="ml-[6.5px] font-bold">auth-service-28</span>
				<span className="ml-[3px]">become.query</span>
				<ChevronRight className="ml-[4.5px] size-[16px] text-[#97979c]" strokeWidth={1.4} />
				<span className="ml-[4px] flex size-[12.5px] items-center justify-center rounded-full bg-[#e9364c] text-[10px] leading-none font-black text-[#1c1c1e]">
					!
				</span>
				<span className="ml-[7px] font-bold whitespace-nowrap">
					INSERT Force author ( across_international, name, exactly_by ) Fig
				</span>
			</div>
			<SpanTabs />
			<div className="bg-[#222226] pt-px pl-[20.5px]">
				<div className="-ml-px h-[11.5px] rounded-bl-[3px] border-b border-l-[5px] border-b-[#5aabe6] border-l-[#5aabe6] bg-[#06205b]">
					<svg viewBox="0 0 500 3" className="h-[3px] w-[500px]" fill="none" stroke="#cfd8e6" strokeWidth="1.2">
						<path d="M69 0q2.5 2 5 0M131 0v1.500M171 0v1M196 0q2.500 2 5 0M205 0v1M279 0v1" />
						<path d="M12 0q2 1.600 4 0M455 0q2 1.600 4 0" stroke="#5aabe6" />
					</svg>
				</div>
			</div>
			<div className="h-[400px] bg-[#222226] pt-[14.5px]">
				<div className="ml-[22.5px] flex h-[22.5px] w-[90.5px] rounded-[4px] text-[11.5px]">
					<span className="flex w-[51px] items-center justify-center rounded-l-[4px] border border-[#5aa2df] bg-[#3e8cd1] text-white">Pretty</span>
					<span className="flex flex-1 items-center justify-center rounded-r-[4px] border border-l-0 border-[#5a5a5f] bg-[#3a3a3e] text-[#d0d0d2]">Raw</span>
				</div>
				<StackTrace />
			</div>
		</div>
	);
}

// side panel that slides over the branch page
function TestDrawer() {
	return (
		<div className="absolute top-[70px] right-0 bottom-0 left-[675.5px] isolate flex shadow-[-8px_0_30px_rgba(0,0,0,0.65)]">
			<TestRuns />
			<div className="flex min-w-0 flex-1 flex-col overflow-hidden bg-[#1c1c1e]">
				<DetailHeader />
				<div className="flex h-[37.7px] items-end pl-[14px] text-[11.5px] text-[#dcdcde]">
					<span className="flex h-[22.5px] w-[56px] items-center">Show as:</span>
					<span className="flex h-[22.5px] w-[87px] items-center justify-center rounded-l-[4px] border border-[#4c96d8] bg-[#3e8cd1]">Flame Graph</span>
					<span className="flex h-[22.5px] w-[66px] items-center justify-center rounded-r-[4px] border border-l-0 border-[#55555a] bg-[#3a3a3e]">Span List</span>
				</div>
				<FlameGraph />
				<SpanPane />
			</div>
		</div>
	);
}

function App() {
	return (
		<div className="relative h-[2048px] w-[4096px] overflow-hidden bg-white font-['Noto_Sans',sans-serif]">
			<div className="absolute top-0 left-0 h-[600px] w-[1200px] origin-top-left [transform:matrix(1.97926,-0.72039,1.35389,1.6135,373.5,1819.1)] rounded-tl-[26px] bg-[linear-gradient(124.4deg,#beb2cc_0px,#9381aa_345px)]" />
			<div className="absolute top-0 left-0 flex h-[1120px] w-[1860px] origin-top-left [transform:matrix(1.97926,-0.72039,1.35389,1.6135,373.5,1150)] flex-col overflow-hidden rounded-tl-[26px]">
				<div className="flex h-[70px] shrink-0 items-center gap-[13.4px] bg-linear-to-b from-[#2c2c2c] to-[#353535] pl-[28px]">
					<div className="size-[19.2px] rounded-full bg-[#ff4638]" />
					<div className="size-[19.2px] rounded-full bg-[#f0d442]" />
					<div className="size-[19.2px] rounded-full bg-[#27c45e]" />
				</div>
				<div className="flex min-h-0 flex-1 overflow-hidden bg-[#1c1c1e]">
					<Sidebar />
					<MainPage />
				</div>
				<TestDrawer />
				<div className="pointer-events-none absolute inset-0 bg-[linear-gradient(to_bottom,rgba(0,0,0,0.62)_0px,rgba(0,0,0,0)_800px)]" />
			</div>
		</div>
	);
}

export default App;
